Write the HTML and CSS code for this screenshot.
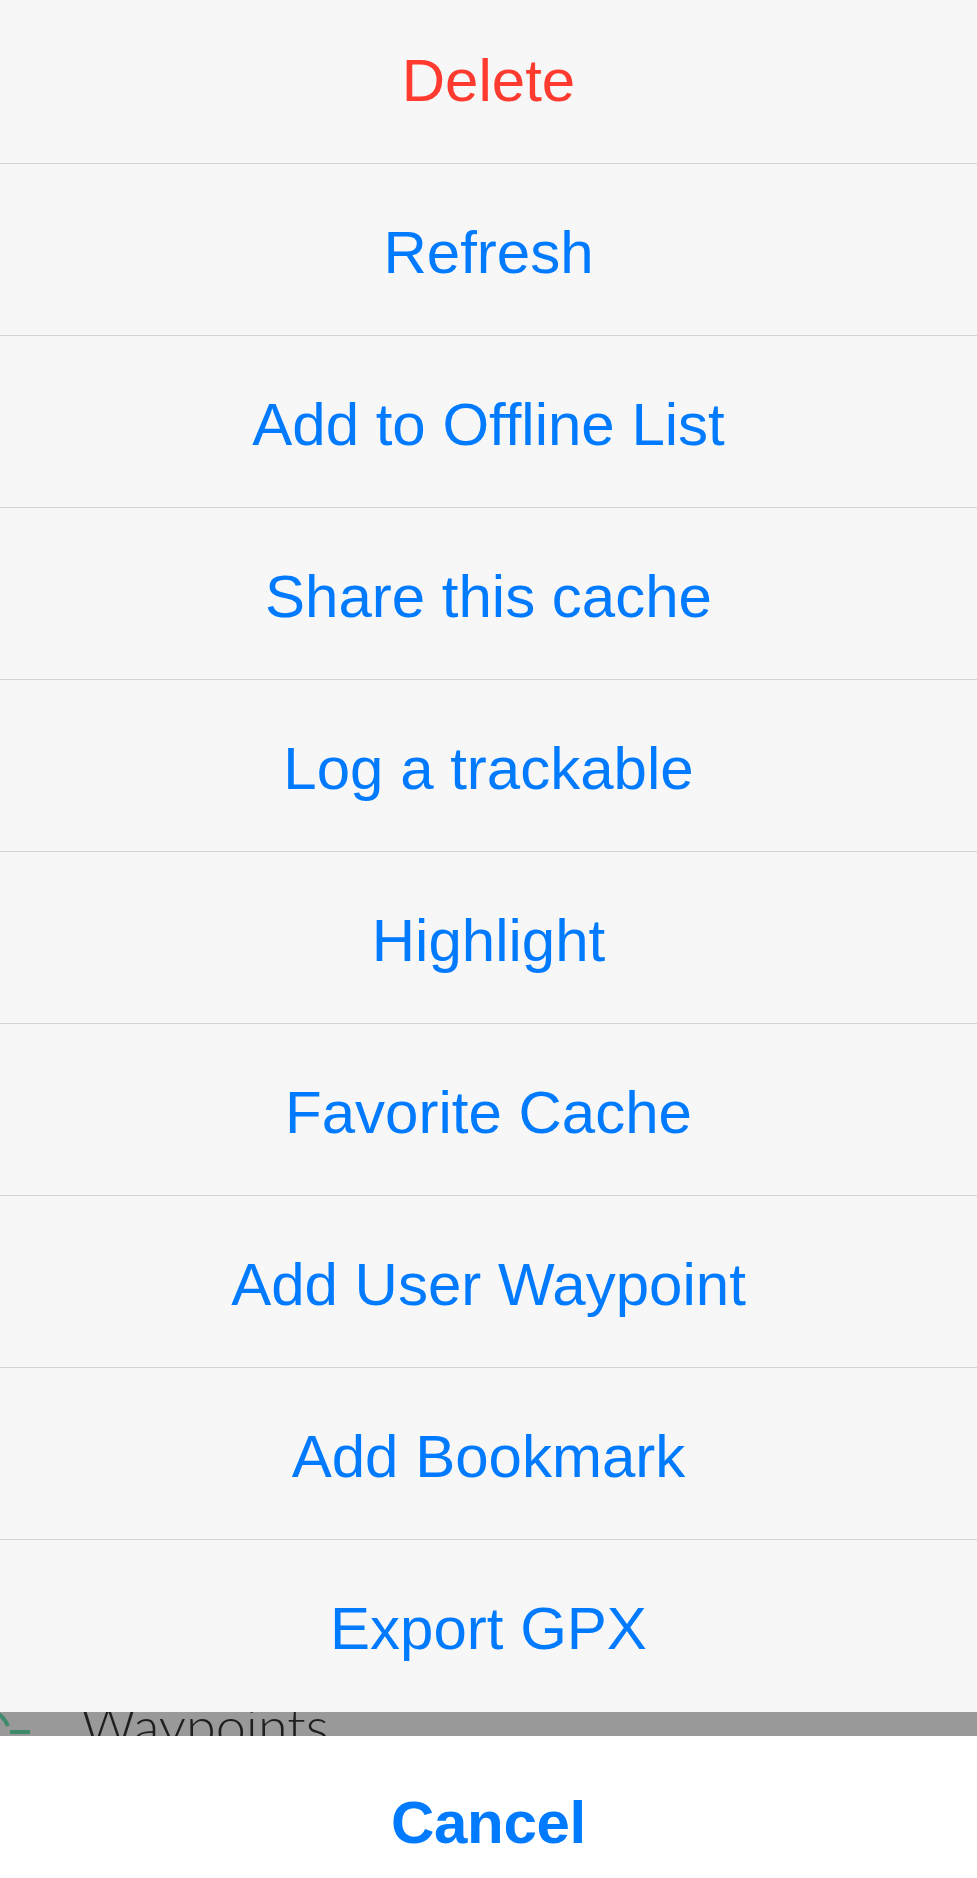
FILE: index.html
```html
<!DOCTYPE html>
<html lang="en">
<head>
<meta charset="utf-8">
<title>Cache actions</title>
<link rel="stylesheet" href="styles.css">
</head>
<body>
<div class="screen">
  <div class="sheet">
    <div class="action destructive">Delete</div>
    <div class="action">Refresh</div>
    <div class="action">Add to Offline List</div>
    <div class="action">Share this cache</div>
    <div class="action">Log a trackable</div>
    <div class="action">Highlight</div>
    <div class="action">Favorite Cache</div>
    <div class="action">Add User Waypoint</div>
    <div class="action">Add Bookmark</div>
    <div class="action">Export GPX</div>
  </div>
  <div class="gap">
    <div class="gap-row">
      <svg class="wp-icon" width="34" height="60" viewBox="0 0 34 60">
        <path d="M-20 4 A30 30 0 0 1 8 22" fill="none" stroke="#3f8a6a" stroke-width="4"/>
        <path d="M10 28 H30" stroke="#3f8a6a" stroke-width="4"/>
      </svg>
      <span class="wp-text">Waypoints</span>
    </div>
  </div>
  <div class="cancel">Cancel</div>
</div>
</body>
</html>
```
FILE: styles.css
```css
html, body {
  margin: 0;
  padding: 0;
}
body {
  width: 977px;
  height: 1878px;
  overflow: hidden;
  background: #999999;
  font-family: "Liberation Sans", Arial, sans-serif;
}
.screen {
  width: 977px;
  height: 1878px;
  display: flex;
  flex-direction: column;
  overflow: hidden;
}
.sheet {
  margin-top: -8px;
  background: #f7f7f7;
  display: flex;
  flex-direction: column;
}
.action {
  box-sizing: border-box;
  height: 172px;
  padding-top: 5px;
  border-bottom: 1px solid #d2d2d6;
  display: flex;
  align-items: center;
  justify-content: center;
  color: #007aff;
  font-size: 60px;
  letter-spacing: 0;
}
.action:last-child {
  border-bottom: none;
}
.action.destructive {
  color: #ff3b30;
}
.gap {
  height: 24px;
  background: #999999;
  overflow: hidden;
  flex: none;
}
.gap-row {
  display: flex;
  align-items: flex-start;
  margin-top: -17px;
}
.wp-icon {
  flex: none;
  margin-top: 9px;
}
.wp-text {
  margin-left: 47px;
  font-family: "Lato", "Liberation Sans", sans-serif;
  font-weight: 300;
  font-size: 54px;
  line-height: 62px;
  color: #1e1e1e;
}
.cancel {
  flex: 1;
  background: #ffffff;
  display: flex;
  justify-content: center;
  align-items: flex-start;
  padding-top: 52px;
  color: #007aff;
  font-size: 60px;
  font-weight: 700;
  letter-spacing: -0.3px;
}
```
